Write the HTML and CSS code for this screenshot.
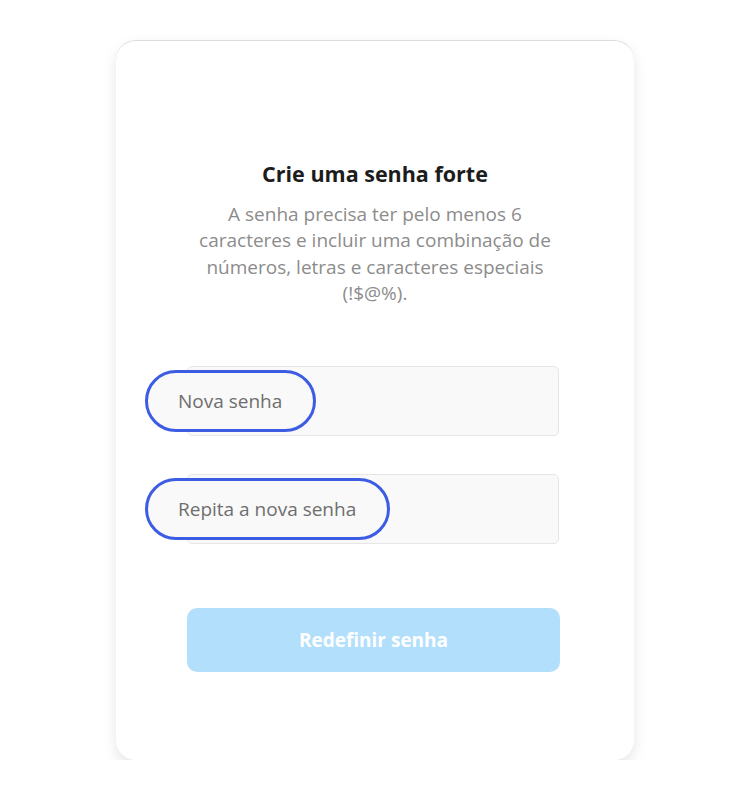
FILE: index.html
```html
<!DOCTYPE html>
<html lang="pt-BR">
<head>
  <meta charset="UTF-8" />
  <meta name="viewport" content="width=device-width, initial-scale=1" />
  <title>Redefinir senha</title>
  <link rel="stylesheet" href="styles.css">
</head>
<body>

  <div class="card">
    <h1>Crie uma senha forte</h1>
    <p class="hint">A senha precisa ter pelo menos 6<br>caracteres e incluir uma combinação de<br>números, letras e caracteres especiais<br>(!$@%).</p>

    <form class="reset-form" onsubmit="return false;">
      <div class="field">
        <input type="password" aria-label="Nova senha" />
        <span class="field-tag">Nova senha</span>
      </div>
      <div class="field">
        <input type="password" aria-label="Repita a nova senha" />
        <span class="field-tag">Repita a nova senha</span>
      </div>

      <button class="submit-btn" disabled>Redefinir senha</button>
    </form>
  </div>

</body>
</html>
```

FILE: styles.css
```css
body {
  margin: 0;
  padding-top: 40px;
  background: #fff;
  font-family: "Open Sans", "Noto Sans", sans-serif;
  color: #1a1a1a;
}

.card {
  width: 518px;
  height: 720px;
  margin: 0 auto;
  box-sizing: border-box;
  padding-top: 119px;
  background: #fff;
  border-top: 1px solid #dcdcdc;
  border-radius: 20px;
  box-shadow: 0 6px 14px rgba(0, 0, 0, 0.1);
}

h1 {
  margin: 0;
  font-size: 21.5px;
  font-weight: bold;
  line-height: 28px;
  text-align: center;
  color: #1c1c1c;
}

.hint {
  margin: 13px 0 0;
  font-size: 19px;
  line-height: 26.3px;
  text-align: center;
  color: #8c8c8c;
}

.reset-form {
  width: 372px;
  margin: 60px 0 0 71px;
}

.field {
  position: relative;
  margin-bottom: 38px;
}

.field input {
  display: block;
  width: 100%;
  height: 70px;
  box-sizing: border-box;
  background: #f9f9f9;
  border: 1px solid #e6e6e6;
  border-radius: 5px;
}

.field-tag {
  position: absolute;
  left: -42px;
  top: 4px;
  height: 62px;
  box-sizing: border-box;
  padding: 0 31px 0 30px;
  display: flex;
  align-items: center;
  font-size: 19px;
  color: #6e6e6e;
  background: #f9f9f9;
  border: 3px solid #3d5ce4;
  border-radius: 31px;
}

.submit-btn {
  display: block;
  width: 373px;
  height: 64px;
  margin-top: 64px;
  background-color: #b2dffc;
  color: #fff;
  font-family: inherit;
  font-size: 19px;
  font-weight: bold;
  border: none;
  border-radius: 10px;
}
```
